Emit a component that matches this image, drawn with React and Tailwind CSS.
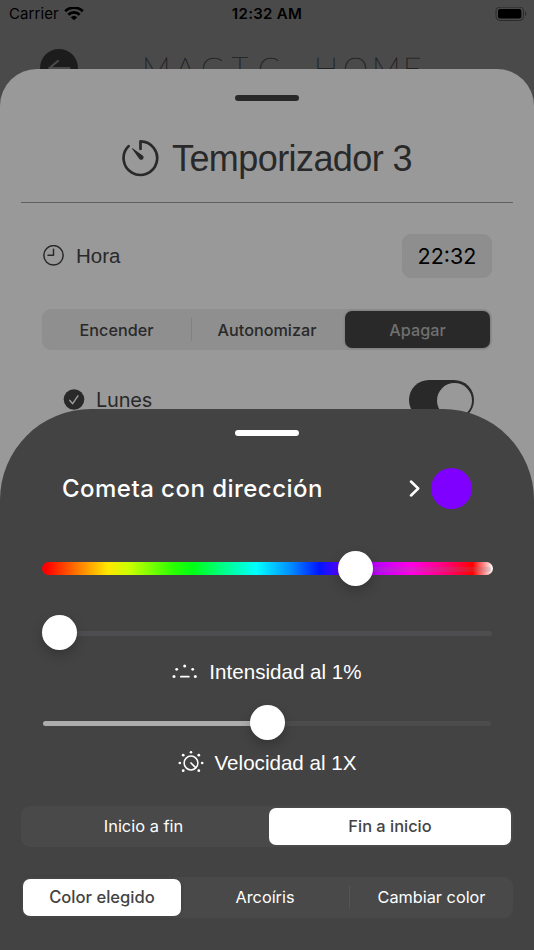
import { clsx } from 'clsx';

function StatusBar() {
  return (
    <div className="relative flex h-[28px] items-center pl-[9px] pr-[7px] text-black">
      <span className="text-[15px] tracking-[0.1px]">Carrier</span>
      <svg className="ml-[5px] h-[15px] w-[20px]" viewBox="0 0 20 15" fill="none" stroke="currentColor" strokeWidth="2.6">
        <path d="M1.2 4.2a12.6 12.6 0 0 1 17.6 0" />
        <path d="M4.3 7.7a8.2 8.2 0 0 1 11.4 0" />
        <path d="M10 13.3 6.7 10.2a4.9 4.9 0 0 1 6.6 0Z" fill="currentColor" stroke="none" />
      </svg>
      <span className="absolute inset-x-0 text-center text-[15px] font-semibold tracking-[0.3px]">12:32 AM</span>
      <svg className="ml-auto h-[15px] w-[32px]" viewBox="0 0 32 15">
        <rect x="1" y="0.1" width="27.5" height="13.4" rx="4" fill="none" stroke="#2b2b2b" strokeWidth="1" />
        <rect x="3" y="2" width="23.4" height="9.4" rx="2" fill="#000" />
        <path d="M30 4.4c1.7.6 1.7 4 0 4.6Z" fill="#2b2b2b" />
      </svg>
    </div>
  );
}

function Grabber({ className }) {
  return <div className={clsx('mx-auto h-[6px] w-[64px] rounded-full', className)} />;
}

function Knob({ className }) {
  return (
    <div
      className={clsx(
        'absolute size-[35px] rounded-full bg-white shadow-[0_5px_12px_rgba(0,0,0,0.22)]',
        className
      )}
    />
  );
}

function TimerIcon() {
  return (
    <svg className="size-[38px]" viewBox="0 0 38 38" fill="none" stroke="#292929" strokeWidth="2.7" strokeLinecap="round" strokeLinejoin="round">
      <path d="M18.5 10V2.3A16.8 16.8 0 1 1 6.6 7.1" />
      <path d="M10.2 10.1c-.5-.6.1-1.2.7-.7l9.8 7.1c2.6 2.1-.8 6.2-3.3 3.4Z" fill="#292929" stroke="none" />
    </svg>
  );
}

function BackHeader() {
  return (
    <div className="flex h-[41px] items-start pl-[40px] pt-[21px]">
      <svg className="size-[38px] shrink-0" viewBox="0 0 38 38" fill="none">
        <circle cx="19" cy="19" r="19" fill="#1c1c1c" />
        <path d="M18 12 9.5 19l8.5 7.7M9.5 19h20" stroke="#4a4a4a" strokeWidth="2.2" strokeLinecap="round" />
      </svg>
      <div className="ml-[64px] flex h-[36px] font-['Lato'] text-[32px] font-thin leading-[37px] text-[#222] [-webkit-text-stroke:0.5px_#222]">
        <span className="w-[33px]">M</span>
        <span className="w-[26px]">A</span>
        <span className="w-[31px]">G</span>
        <span className="mr-[10px] mt-[8px] h-[28px] w-[16px] border-t border-[#282828] text-center leading-[20px]">I</span>
        <span className="w-[56px]">C</span>
        <span className="w-[29px]">H</span>
        <span className="w-[29px]">O</span>
        <span className="w-[31px]">M</span>
        <span>E</span>
      </div>
    </div>
  );
}

function TimerSheet() {
  return (
    <section className="relative h-[440px] rounded-t-[37px] bg-[#999] px-[21px] pt-[26px] text-[#292929]">
      <Grabber className="bg-[#292929]" />
      <div className="mt-[37px] flex h-[40px] items-center pl-[101px]">
        <TimerIcon />
        <h1 className="ml-[12px] mt-[2px] whitespace-nowrap font-['Liberation_Sans'] text-[36px] tracking-[-0.58px]">Temporizador 3</h1>
      </div>
      <div className="mt-[24px] h-px bg-[#606060]" />

      <div className="px-[21px]">
        <div className="mt-[31px] flex h-[44px] items-center">
          <svg className="size-[22px]" viewBox="0 0 22 22" fill="none" stroke="#292929" strokeWidth="1.5" strokeLinecap="round" strokeLinejoin="round">
            <circle cx="11.5" cy="10.3" r="9.7" />
            <path d="M11.5 4.3v6H6" />
          </svg>
          <span className="ml-[12px] font-['Liberation_Sans'] text-[20.5px]">Hora</span>
          <div className="ml-auto flex h-[44px] w-[90px] items-center justify-center rounded-[9px] bg-[#8e8e8e] text-[21.5px] text-black">
            22:32
          </div>
        </div>

        <div className="mt-[31px] flex h-[41px] w-[450px] items-center rounded-[9px] bg-[#8f8f8f] text-[16.2px] font-medium">
          <span className="w-[149px] pt-[1px] text-center">Encender</span>
          <i className="h-[23px] w-px bg-[#818181]" />
          <span className="w-[150px] pt-[1px] text-center">Autonomizar</span>
          <span className="ml-[3px] flex h-[37px] w-[145px] items-center justify-center rounded-[7px] bg-[#292929] pt-[1px] text-[#707070] shadow-[0_0_3px_rgba(0,0,0,0.2)]">
            Apagar
          </span>
        </div>

        <div className="mt-[30px] flex h-[40px] items-center pl-[21px] pr-[18px]">
          <svg className="size-[22px]" viewBox="0 0 22 22" fill="none">
            <circle cx="11" cy="10.5" r="10.3" fill="#292929" />
            <path d="m6.8 11.4 2.9 3.3 5.2-7.8" stroke="#999" strokeWidth="1.5" strokeLinecap="round" strokeLinejoin="round" />
          </svg>
          <span className="ml-[11px] text-[20px] tracking-[-0.2px]">Lunes</span>
          <div className="ml-auto flex h-[40px] w-[65px] items-center justify-end rounded-full bg-[#292929] pr-[2.5px]">
            <div className="size-[35px] rounded-full bg-[#999]" />
          </div>
        </div>
      </div>
    </section>
  );
}

function HueSlider() {
  return (
    <div className="relative mx-[41.5px] h-[13px] rounded-full bg-[linear-gradient(90deg,#f00_1%,#ff7a00_8%,#ffe600_14.5%,#c8ff00_19.5%,#2bff00_29%,#00ff15_33.5%,#00ff95_41%,#00ffff_47.5%,#0090ff_55%,#0015ff_61.5%,#6a00ff_67%,#b400ff_73%,#ff00e5_82%,#ff0080_89%,#ff0000_95.5%,#ffffff_100%)]">
      {/* translucent track showing through the right half */}
      <div className="absolute right-[2px] top-[5px] h-[5px] w-[140px] rounded-full bg-[#787880]/20" />
      <Knob className="-top-[11.5px] left-[296px]" />
    </div>
  );
}

function DotsIcon() {
  return (
    <svg className="h-[24px] w-[26px]" viewBox="0 0 26 24" fill="white">
      <circle cx="2" cy="16.5" r="1.5" />
      <circle cx="4.7" cy="9.3" r="1.4" />
      <circle cx="12.7" cy="6" r="1.5" />
      <circle cx="20.7" cy="9.3" r="1.4" />
      <circle cx="23.3" cy="16.5" r="1.5" />
      <rect x="8" y="15.8" width="9.7" height="1.8" rx=".9" />
    </svg>
  );
}

function DialIcon() {
  return (
    <svg className="h-[24px] w-[26px]" viewBox="0 0 26 24" fill="white">
      <circle cx="13" cy="12" r="6.9" fill="none" stroke="white" strokeWidth="1.5" />
      <path d="m13 12 4.6 4.6" stroke="white" strokeWidth="1.7" strokeLinecap="round" />
      <circle cx="13" cy="1.3" r="1.3" />
      <circle cx="5.2" cy="4.2" r="1.4" />
      <circle cx="20.8" cy="4.2" r="1.4" />
      <circle cx="1.8" cy="12" r="1.3" />
      <circle cx="24.2" cy="12" r="1.3" />
      <circle cx="5.2" cy="19.7" r="1.4" />
      <circle cx="20.8" cy="19.7" r="1.4" />
    </svg>
  );
}

function EffectSheet() {
  return (
    <section className="relative -mt-[100px] h-[541px] rounded-t-[91px] bg-[#434343] pt-[21px] text-white">
      <Grabber className="bg-white" />

      <div className="mt-[31px] flex h-[42px] items-center pl-[62px] pr-[62px]">
        <h2 className="mt-[2px] whitespace-nowrap text-[24px] font-medium tracking-[0.47px]">Cometa con dirección</h2>
        <svg className="ml-auto mr-[11px] h-[18px] w-[11px]" viewBox="0 0 11 18" fill="none" stroke="white" strokeWidth="2.5" strokeLinecap="round" strokeLinejoin="round">
          <path d="m2 2.5 7.2 7-7.2 7" />
        </svg>
        <div className="size-[41px] rounded-full bg-[#8000ff]" />
      </div>

      <div className="pt-[53px]">
        <HueSlider />
      </div>

      <div className="relative mx-[42px] mt-[56px] h-[5px] rounded-full bg-[#4e4e50]">
        <Knob className="-left-[0.5px] -top-[16px]" />
      </div>
      <div className="mt-[24px] flex h-[24px] items-center justify-center gap-[11px] font-['Liberation_Sans'] text-[20.6px]">
        <DotsIcon />
        <span>Intensidad al 1%</span>
      </div>

      <div className="relative mx-[43px] mt-[37px] h-[5px] rounded-full bg-[#4c4c4d]">
        <div className="h-[5px] w-[224px] rounded-full bg-[#adadad]" />
        <Knob className="-top-[16.5px] left-[207px]" />
      </div>
      <div className="mt-[25px] flex h-[24px] items-center justify-center gap-[11px] font-['Liberation_Sans'] text-[20.6px]">
        <DialIcon />
        <span>Velocidad al 1X</span>
      </div>

      <div className="mx-[21px] mt-[31px] flex h-[41px] items-center rounded-[9px] bg-[#494949] text-[16.4px]">
        <span className="w-[245px] text-center">Inicio a fin</span>
        <span className="ml-[3px] flex h-[37px] w-[242px] items-center justify-center rounded-[7px] bg-white pb-[1px] font-medium text-[#434343]">
          Fin a inicio
        </span>
      </div>

      <div className="mx-[21px] mt-[30px] flex h-[41px] items-center rounded-[9px] bg-[#494949] text-[16.3px]">
        <span className="ml-[2px] flex h-[37px] w-[158px] items-center justify-center rounded-[7px] bg-white pb-[1px] text-[16.6px] font-medium text-[#434343] shadow-[0_0_4px_rgba(0,0,0,0.15)]">
          Color elegido
        </span>
        <span className="w-[168px] text-center">Arcoíris</span>
        <i className="h-[23px] w-px bg-[#555]" />
        <span className="w-[163px] text-center">Cambiar color</span>
      </div>
    </section>
  );
}

export default function App() {
  return (
    <main className="h-[950px] w-[534px] overflow-hidden bg-[#4a4a4a] font-['Inter',sans-serif]">
      <StatusBar />
      <BackHeader />
      <TimerSheet />
      <EffectSheet />
    </main>
  );
}
